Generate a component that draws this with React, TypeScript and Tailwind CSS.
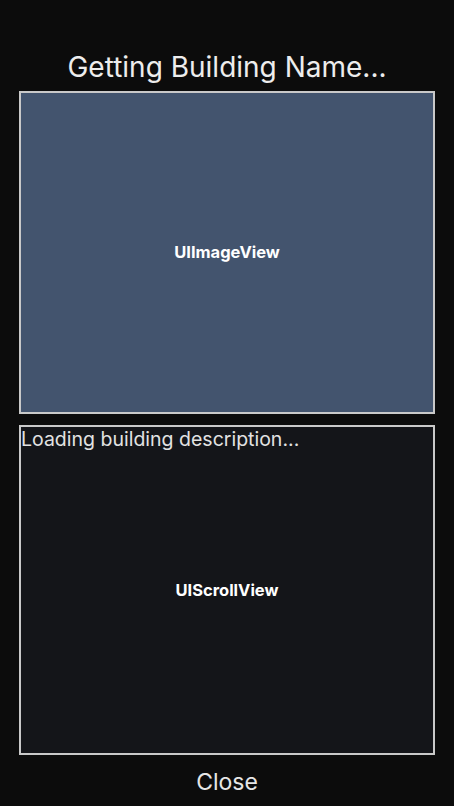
export default function App() {
  return (
    <div
      className="h-[806px] w-full overflow-hidden bg-[#0c0c0c] flex flex-col"
      style={{ fontFamily: 'Inter, "Noto Sans", sans-serif' }}
    >
      <div className="h-[91px] shrink-0 flex items-end justify-center pb-[7px]">
        <div className="text-[28px] leading-[34px] text-[#ededed]">Getting Building Name...</div>
      </div>

      <div className="mx-[19px] h-[323px] shrink-0 border-2 border-[#c9c9c9] bg-[#43546e] flex items-center justify-center">
        <span className="text-[16.5px] font-bold text-white">UIImageView</span>
      </div>

      <div className="mx-[19px] mt-[11px] h-[330px] shrink-0 border-2 border-[#c9c9c9] bg-[#141519] relative flex items-center justify-center">
        <div className="absolute left-0 top-0 text-[19.5px] leading-[24px] text-[#e2e2e2]">
          Loading building description...
        </div>
        <span className="text-[16.5px] font-bold text-white">UIScrollView</span>
      </div>

      <div className="h-[51px] shrink-0 flex items-center justify-center pt-[3px]">
        <button className="text-[23px] text-[#e6e6e6]">Close</button>
      </div>
    </div>
  );
}
